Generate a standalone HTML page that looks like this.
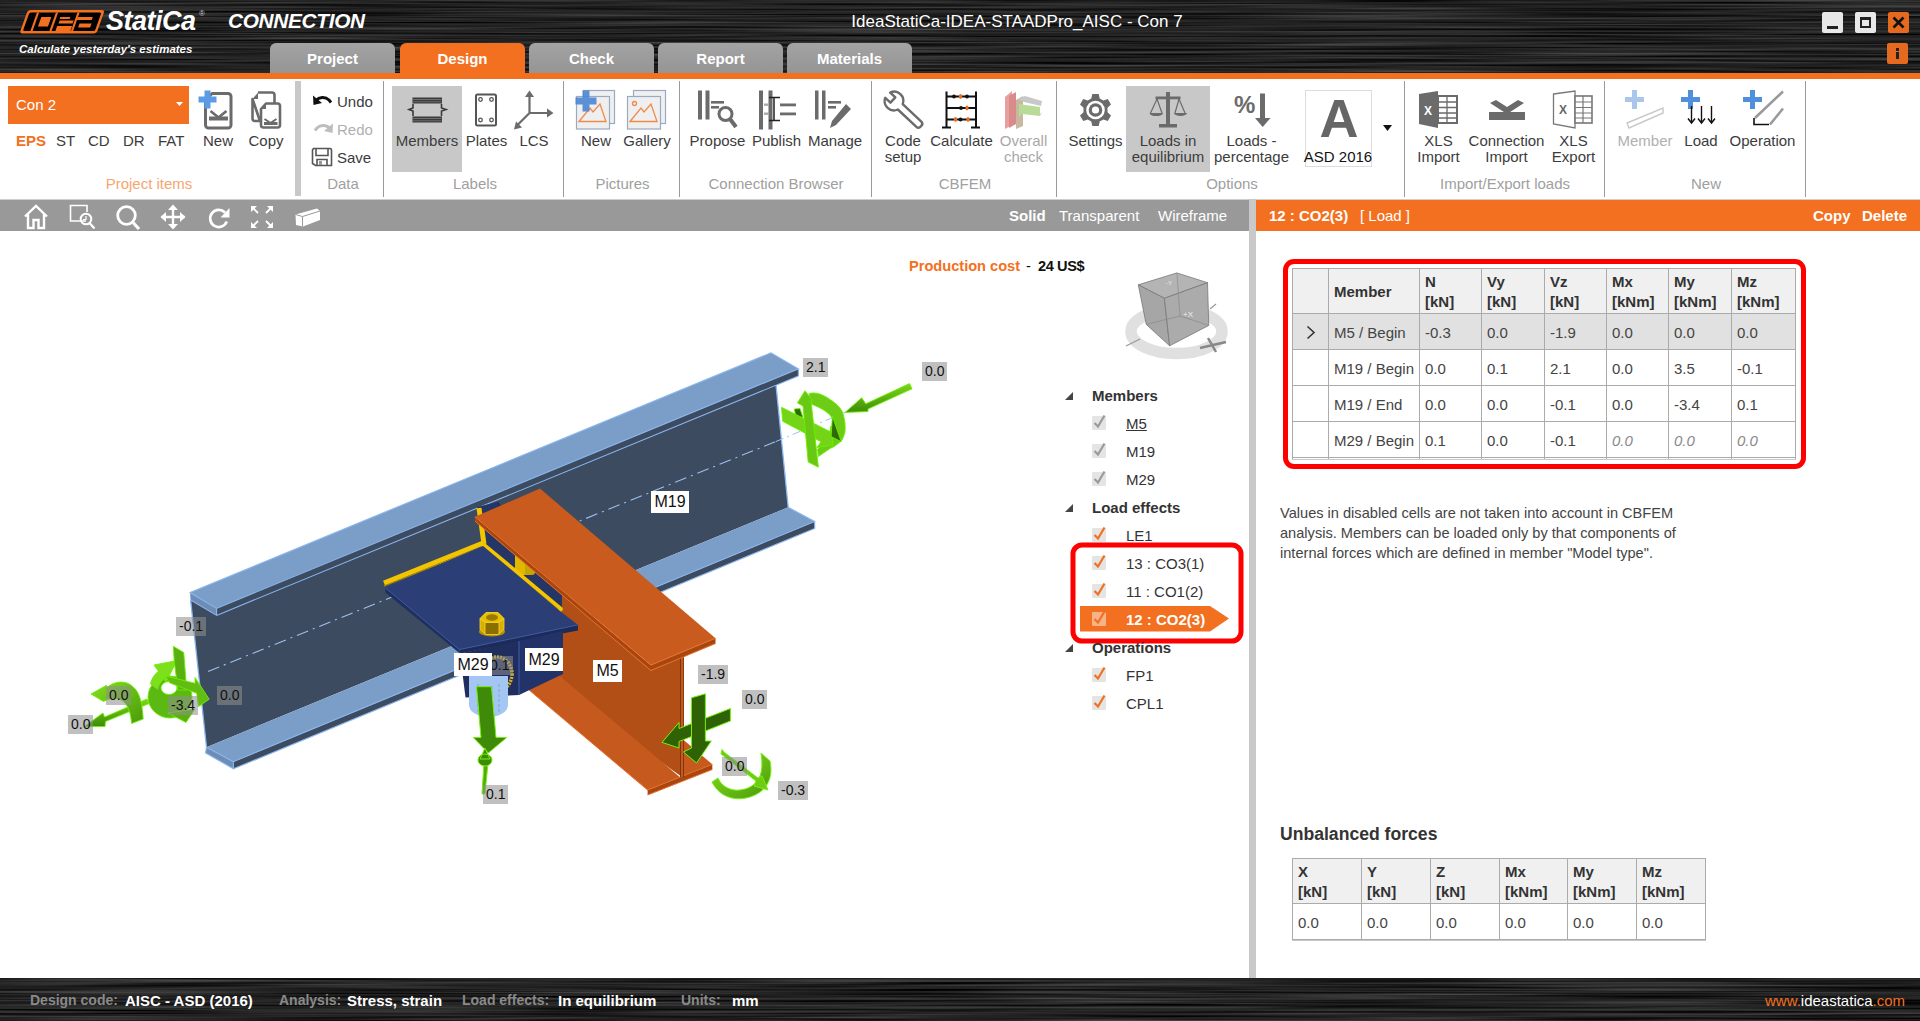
<!DOCTYPE html>
<html><head><meta charset="utf-8">
<style>
*{margin:0;padding:0;box-sizing:border-box}
html,body{width:1920px;height:1021px;overflow:hidden;background:#fff;font-family:"Liberation Sans",sans-serif;color:#333}
.a{position:absolute}
.brushed{background:
 repeating-linear-gradient(180deg,rgba(0,0,0,0) 0px,rgba(255,255,255,.07) 1.5px,rgba(0,0,0,0) 3px,rgba(0,0,0,0) 4.7px),
 repeating-linear-gradient(180deg,rgba(0,0,0,0) 0px,rgba(0,0,0,.4) 2px,rgba(0,0,0,0) 4px,rgba(0,0,0,0) 7.3px),
 repeating-linear-gradient(180deg,rgba(0,0,0,0) 0px,rgba(255,255,255,.05) 2px,rgba(0,0,0,0) 4px,rgba(0,0,0,0) 11.1px),
 linear-gradient(90deg,rgba(255,255,255,.02),rgba(0,0,0,.1) 30%,rgba(255,255,255,.03) 60%,rgba(0,0,0,.08)),
 #262626;}
#title{left:0;top:0;width:1920px;height:73px}
#ostrip{left:0;top:73px;width:1920px;height:6px;background:#f37021}
.tab{top:43px;height:30px;width:125px;border-radius:6px 6px 0 0;background:linear-gradient(#a3a3a3,#959595);color:#fff;font-weight:bold;font-size:15px;text-align:center;line-height:31px}
.tab.on{background:#f37021}
.wbtn{width:21px;height:21px;border-radius:2px;background:#e8e8e8}
#ribbon{left:0;top:79px;width:1920px;height:120px;background:#fff}
.rl{font-size:15px;color:#3c3c3c;white-space:nowrap;line-height:16px;text-align:center}
.gl{font-size:15px;color:#a0a0a0;white-space:nowrap;line-height:16px}
.sep{width:1px;background:#9a9a9a;top:81px;height:116px}
#vtool{left:0;top:199px;width:1249px;height:32px;background:#999;border-top:1px solid #c9d0d6}
#splitter{left:1249px;top:199px;width:7px;height:780px;background:#c9c9c9}
#rhead{left:1256px;top:199px;width:664px;height:32px;background:#f37021;border-top:1px solid #c9d0d6}
#status{left:0;top:978px;width:1920px;height:43px}
.st{font-size:15px;top:992px;white-space:nowrap;line-height:17px}
.stl{color:#8a8a8a;font-weight:bold;font-size:14px}
.stv{color:#fff;font-weight:bold}
table.g{border-collapse:collapse;font-size:15px;color:#333}
table.g td,table.g th{border:1px solid #c9c9c9;text-align:left;font-weight:normal;vertical-align:middle;padding:0 0 0 5px;white-space:nowrap}
table.g th{background:#f0f0f0;font-weight:bold;line-height:20px}
.tree{font-size:15px;color:#333;white-space:nowrap;line-height:17px}
.lbl{position:absolute;font-size:14px;line-height:16px;padding:1px 3px;white-space:nowrap;font-family:"Liberation Sans",sans-serif}
.lg{background:#bdbdbd;color:#333}
.lw{background:#fff;color:#111;font-size:17px;line-height:19px;padding:1px 4px}
</style></head>
<body>
<!-- TITLE BAR -->
<div id="title" class="a" style="background:#222"><svg class="a" style="left:0;top:0" width="1920" height="73"><defs><filter id="brush" color-interpolation-filters="sRGB" x="0" y="0" width="100%" height="100%"><feTurbulence type="fractalNoise" baseFrequency="0.004 0.45" numOctaves="2" seed="7"/><feColorMatrix type="matrix" values="0.42 0 0 0 -0.075  0.42 0 0 0 -0.075  0.42 0 0 0 -0.075  0 0 0 0 1"/></filter></defs><rect width="1920" height="73" fill="#222"/><rect width="1920" height="73" filter="url(#brush)"/></svg></div>
<div id="ostrip" class="a"></div>

<!-- tabs -->
<div class="a tab" style="left:270px">Project</div>
<div class="a tab on" style="left:400px">Design</div>
<div class="a tab" style="left:529px">Check</div>
<div class="a tab" style="left:658px">Report</div>
<div class="a tab" style="left:787px">Materials</div>

<div class="a" style="left:0;top:11px;width:2034px;text-align:center;color:#fff;font-size:17px;line-height:22px">IdeaStatiCa-IDEA-STAADPro_AISC - Con 7</div>

<!-- window buttons -->
<div class="a wbtn" style="left:1822px;top:12px"><div class="a" style="left:5px;top:14px;width:11px;height:3px;background:#222"></div></div>
<div class="a wbtn" style="left:1855px;top:12px"><div class="a" style="left:5px;top:5px;width:11px;height:11px;border:2px solid #222;border-top-width:3px"></div></div>
<div class="a wbtn" style="left:1888px;top:12px;background:#e56a1f"><svg class="a" style="left:0;top:0" width="21" height="21"><path d="M5.5 5.5L15.5 15.5M15.5 5.5L5.5 15.5" stroke="#111" stroke-width="2.6"/></svg></div>
<div class="a wbtn" style="left:1887px;top:43px;background:#e56a1f"><div class="a" style="left:9px;top:5px;width:3px;height:3px;background:#222"></div><div class="a" style="left:9px;top:9px;width:3px;height:7px;background:#222"></div></div>

<!-- RIBBON -->
<div id="ribbon" class="a"></div>
<!-- ribbon content -->
<div class="a" style="left:8px;top:86px;width:181px;height:38px;background:#f37021"></div>
<div class="a" style="left:16px;top:96px;color:#fff;font-size:15px;line-height:18px">Con 2</div>
<svg class="a" style="left:176px;top:102px" width="8" height="5"><path d="M0 0H7L3.5 4Z" fill="#fff"/></svg>
<div class="a rl" style="left:16px;top:133px;color:#f37021;font-weight:bold;text-align:left">EPS</div>
<div class="a rl" style="left:56px;top:133px;text-align:left">ST</div>
<div class="a rl" style="left:88px;top:133px;text-align:left">CD</div>
<div class="a rl" style="left:123px;top:133px;text-align:left">DR</div>
<div class="a rl" style="left:158px;top:133px;text-align:left">FAT</div>
<div class="a sep" style="left:295px;width:6px;background:#c8c8c8;top:81px;height:115px"></div>
<div class="a" style="left:392px;top:86px;width:70px;height:86px;background:#c8c8c8"></div>
<div class="a" style="left:1126px;top:86px;width:84px;height:86px;background:#c8c8c8"></div>
<div class="a" style="left:1305px;top:90px;width:67px;height:77px;border:1px solid #dcdcdc"></div>
<div class="a" style="left:1318px;top:88px;width:42px;text-align:center;font-weight:bold;font-size:54px;line-height:60px;color:#666">A</div>
<svg class="a" style="left:1383px;top:125px" width="10" height="7"><path d="M0 0H9L4.5 6Z" fill="#111"/></svg>
<div class="a sep" style="left:383px"></div>
<div class="a sep" style="left:563px"></div>
<div class="a sep" style="left:679px"></div>
<div class="a sep" style="left:871px"></div>
<div class="a sep" style="left:1056px"></div>
<div class="a sep" style="left:1404px"></div>
<div class="a sep" style="left:1604px"></div>
<div class="a sep" style="left:1805px"></div>
<div class="a rl" style="left:158px;width:120px;top:133px">New</div>
<div class="a rl" style="left:206px;width:120px;top:133px">Copy</div>
<div class="a rl" style="left:367px;width:120px;top:133px">Members</div>
<div class="a rl" style="left:426.5px;width:120px;top:133px">Plates</div>
<div class="a rl" style="left:474px;width:120px;top:133px">LCS</div>
<div class="a rl" style="left:536px;width:120px;top:133px">New</div>
<div class="a rl" style="left:587px;width:120px;top:133px">Gallery</div>
<div class="a rl" style="left:657.5px;width:120px;top:133px">Propose</div>
<div class="a rl" style="left:716.5px;width:120px;top:133px">Publish</div>
<div class="a rl" style="left:775px;width:120px;top:133px">Manage</div>
<div class="a rl" style="left:843px;width:120px;top:133px">Code<br>setup</div>
<div class="a rl" style="left:901.5px;width:120px;top:133px">Calculate</div>
<div class="a rl" style="left:963.5px;width:120px;top:133px"><span style="color:#a8a8a8">Overall<br>check</span></div>
<div class="a rl" style="left:1035.5px;width:120px;top:133px">Settings</div>
<div class="a rl" style="left:1108px;width:120px;top:133px">Loads in<br>equilibrium</div>
<div class="a rl" style="left:1191.5px;width:120px;top:133px">Loads -<br>percentage</div>
<div class="a rl" style="left:1278px;width:120px;top:149px"><span style="color:#111">ASD 2016</span></div>
<div class="a rl" style="left:1378.5px;width:120px;top:133px">XLS<br>Import</div>
<div class="a rl" style="left:1446.5px;width:120px;top:133px">Connection<br>Import</div>
<div class="a rl" style="left:1513.5px;width:120px;top:133px">XLS<br>Export</div>
<div class="a rl" style="left:1585px;width:120px;top:133px"><span style="color:#b0b0b0">Member</span></div>
<div class="a rl" style="left:1641px;width:120px;top:133px">Load</div>
<div class="a rl" style="left:1702.5px;width:120px;top:133px">Operation</div>
<div class="a rl" style="left:337px;top:94px;text-align:left">Undo</div>
<div class="a rl" style="left:337px;top:122px;text-align:left;color:#b0b0b0">Redo</div>
<div class="a rl" style="left:337px;top:150px;text-align:left">Save</div>
<div class="a gl" style="left:49px;width:200px;text-align:center;top:176px"><span style="color:#f6a66f">Project items</span></div>
<div class="a gl" style="left:243px;width:200px;text-align:center;top:176px">Data</div>
<div class="a gl" style="left:375px;width:200px;text-align:center;top:176px">Labels</div>
<div class="a gl" style="left:522.5px;width:200px;text-align:center;top:176px">Pictures</div>
<div class="a gl" style="left:676px;width:200px;text-align:center;top:176px">Connection Browser</div>
<div class="a gl" style="left:865px;width:200px;text-align:center;top:176px">CBFEM</div>
<div class="a gl" style="left:1132px;width:200px;text-align:center;top:176px">Options</div>
<div class="a gl" style="left:1405px;width:200px;text-align:center;top:176px">Import/Export loads</div>
<div class="a gl" style="left:1606px;width:200px;text-align:center;top:176px">New</div>
<!--ICONS-->
<svg class="a" style="left:0;top:0" width="1920" height="200">
<g fill="none" stroke="#6b6b6b" stroke-width="3" stroke-linejoin="round">
 <!-- New doc -->
 <path d="M212 93.5H228a3 3 0 0 1 3 3V125a3 3 0 0 1-3 3H208.5a3 3 0 0 1-3-3V100Z"/>
 <path d="M210.5 111L218.5 117.5L226.5 111" stroke-width="2.6"/>
 <!-- copy docs -->
 <path d="M258 92.5H272a2.5 2.5 0 0 1 2.5 2.5V103M260 121H255a2.5 2.5 0 0 1-2.5-2.5V99Z" stroke-width="2.6"/>
 <path d="M266 103.5H277.5a2.5 2.5 0 0 1 2.5 2.5V125a2.5 2.5 0 0 1-2.5 2.5H263.5a2.5 2.5 0 0 1-2.5-2.5V109Z" stroke-width="2.6"/>
 <path d="M264.5 119L270.5 123L276.5 119" stroke-width="2"/>
</g>
<rect x="209" y="116.5" width="19" height="4" fill="#6b6b6b"/>
<path d="M252.5 99L258 92.5V99Z" fill="#6b6b6b"/>
<path d="M261 109L266 103.5V109Z" fill="#6b6b6b"/>
<rect x="264" y="122" width="13.5" height="3" fill="#6b6b6b"/>
<path d="M204.5 90.5h6v6h6v6h-6v6h-6v-6h-6v-6h6z" fill="#5c9ce6"/>
<!-- Undo / Redo -->
<path d="M316 100.5 C319 97 325 96 329 100 L331 102.5" fill="none" stroke="#111" stroke-width="3"/>
<path d="M313 95.5L313.5 105L322 103Z" fill="#111"/>
<path d="M330 128.5 C327 125 321 124 317 128 L315 130.5" fill="none" stroke="#bdbdbd" stroke-width="3"/>
<path d="M333 123.5L332.5 133L324 131Z" fill="#bdbdbd"/>
<!-- Save floppy -->
<g fill="none" stroke="#555" stroke-width="1.6">
<path d="M313.5 148.5H330a1.5 1.5 0 0 1 1.5 1.5V165.5H315.5L312.5 163.5V150Z"/>
<path d="M316 148.5V155.5H328V148.5M317 165.5V159.5H327V165.5"/>
</g>
<rect x="319" y="161" width="3" height="4" fill="#999"/>
<!-- Members -->
<g fill="#3a3a3a">
<rect x="412.5" y="97.5" width="29.5" height="6"/><rect x="412.5" y="116.5" width="29.5" height="6"/>
</g><path d="M413,99.5H441.5M413,101.8H441.5M413,118.5H441.5M413,120.8H441.5" stroke="#888" stroke-width="0.7"/>
<path d="M413 104V108L409 109.5L413 111V116M441.5 104V108L446 109.5L441.5 111V116" fill="none" stroke="#3a3a3a" stroke-width="1.6"/>
<!-- Plates -->
<rect x="476" y="94.5" width="20" height="31" rx="1.5" fill="none" stroke="#555" stroke-width="2"/>
<g fill="none" stroke="#555" stroke-width="1.3"><circle cx="480.5" cy="99.5" r="1.8"/><circle cx="491.5" cy="99.5" r="1.8"/><circle cx="480.5" cy="120" r="1.8"/><circle cx="491.5" cy="120" r="1.8"/></g>
<!-- LCS -->
<g stroke="#6b6b6b" stroke-width="2.2" fill="none"><path d="M529.5 113V95M529.5 113H549M529.5 113L517 125.5"/></g>
<g fill="#6b6b6b"><path d="M525 97L529.5 90.5L534 97Z"/><path d="M547 108.5L553.5 113L547 117.5Z"/><path d="M514 129.5L516 121.5L522 127.5Z"/></g>
<!-- pictures New -->
<g stroke="#9aa9c4" stroke-width="1.2">
<rect x="583.5" y="90.5" width="31" height="33" fill="#f0f0f0"/>
<rect x="576.5" y="96.5" width="33" height="32.5" fill="#efefef"/>
<rect x="633.5" y="90.5" width="32" height="33" fill="#f0f0f0"/>
<rect x="627.5" y="96.5" width="33" height="32.5" fill="#efefef"/>
</g>
<g fill="none" stroke="#f08a4b" stroke-width="1.3">
<path d="M579 121.5L590 108L593 112L600 104L606 121.5Z"/>
<path d="M630 121.5L641 108L644 112L651 104L657 121.5Z"/>
<circle cx="634.5" cy="103.5" r="2"/>
</g>
<path d="M582.5 90.5h7v7h7v7h-7v7h-7v-7h-7v-7h7z" fill="#4d86d4" opacity=".9"/>
<!-- Propose -->
<g fill="#6b6b6b">
<rect x="698" y="90.5" width="4" height="29"/><rect x="705.5" y="90.5" width="4" height="29"/>
<rect x="711" y="101" width="13" height="2.6"/><rect x="711" y="106" width="8" height="2.6"/>
<rect x="759" y="90.5" width="4" height="39"/><rect x="768.5" y="90.5" width="4" height="39"/>
<rect x="780" y="103.5" width="16" height="2.8"/><rect x="780" y="112.5" width="16" height="2.8"/><rect x="764" y="103.5" width="5" height="2.4" fill="#aaa"/><rect x="764" y="112.5" width="5" height="2.4" fill="#aaa"/>
<rect x="815" y="90.5" width="3.5" height="29"/><rect x="822" y="90.5" width="3.5" height="29"/>
<rect x="828" y="101" width="13" height="2.6"/><rect x="828" y="106" width="8" height="2.6"/>
</g>
<circle cx="725.5" cy="114" r="6.5" fill="none" stroke="#6b6b6b" stroke-width="3"/>
<path d="M730 119L736 127" stroke="#6b6b6b" stroke-width="4"/>
<path d="M774 97.5V121M769 97.5H780M769 120.5H780" stroke="#222" stroke-width="1.5"/>
<path d="M846 104L851 109L836 125L830 128L832 121Z" fill="#6b6b6b"/>
<!-- Code setup wrench -->
<g transform="translate(894,101) rotate(43)"><path d="M8.6,3.6 L34,3.6 Q37,3.6 37,0 Q37,-3.6 34,-3.6 L8.6,-3.6 A9.3 9.3 0 0 0 -8.6,-3.6 L-1.5,-3.6 L-1.5,3.6 L-8.6,3.6 A9.3 9.3 0 0 0 8.6,3.6 Z" fill="none" stroke="#6b6b6b" stroke-width="2.4" stroke-linejoin="round"/></g>
<!-- Calculate abacus -->
<g stroke="#111" stroke-width="2" fill="none">
<path d="M946.5 91.5V127M976 91.5V127M942 127.5H951M971 127.5H980M946.5 96.5H976M946.5 108H976M946.5 119.5H976"/>
</g>
<g fill="#111"><circle cx="954" cy="96.5" r="1.9"/><circle cx="967" cy="96.5" r="1.9"/><circle cx="961" cy="108" r="1.9"/><circle cx="960.5" cy="119.5" r="1.9"/></g>
<g fill="#f07020"><ellipse cx="960.5" cy="96.5" rx="1.6" ry="2.4"/><ellipse cx="967" cy="108" rx="1.6" ry="2.4"/><ellipse cx="955.5" cy="119.5" rx="1.6" ry="2.4"/><ellipse cx="968" cy="119.5" rx="1.6" ry="2.4"/></g>
<!-- Overall check -->
<path d="M1005 97L1012 91V125L1005 129Z" fill="#e6a0a0"/>
<path d="M1009 96L1016 92V124L1009 128Z" fill="#d98a8a"/>
<path d="M1016 100L1023 96V126L1016 129Z" fill="#c8b8a0"/>
<path d="M1018 99L1025 96L1042 101L1041 106L1024 102Z" fill="#c8c8c8"/>
<path d="M1019 104L1040 107V114L1042 112L1040 116L1022 114L1019 117Z" fill="#b8dc98"/>
<!-- Settings gear -->
<g transform="translate(1095.5,110)">
<path d="M-3.2-16H3.2L4.2-11.4L7.8-9.4L12.3-10.9L15.5-5.4L12-2.2V2.2L15.5 5.4L12.3 10.9L7.8 9.4L4.2 11.4L3.2 16H-3.2L-4.2 11.4L-7.8 9.4L-12.3 10.9L-15.5 5.4L-12 2.2V-2.2L-15.5-5.4L-12.3-10.9L-7.8-9.4L-4.2-11.4Z" fill="#6b6b6b"/>
<circle r="9.3" fill="#fff"/><circle r="6.8" fill="#6b6b6b"/><circle r="3.6" fill="#fff"/>
</g>
<!-- Scales -->
<g fill="#6b6b6b">
<rect x="1166" y="92" width="4" height="33"/><rect x="1155.5" y="96.5" width="25" height="2.8"/><rect x="1159" y="124" width="18" height="3.5"/>
</g>
<g fill="none" stroke="#6b6b6b" stroke-width="1.2"><path d="M1157 99L1150.5 113M1157 99L1162 113M1179 99L1175 113M1179 99L1185 113"/></g>
<path d="M1149.5 113H1163a6.7 3 0 0 1-13.5 0Z M1174 113H1187a6.5 3 0 0 1-13 0Z" fill="#6b6b6b"/>
<!-- % arrow -->
<text x="1234" y="112.5" font-family="Liberation Sans" font-weight="bold" font-size="24" fill="#6b6b6b" textLength="21">%</text>
<rect x="1260" y="93.5" width="5" height="27" fill="#6b6b6b"/>
<path d="M1255 118H1270.5L1262.7 127Z" fill="#6b6b6b"/>
<!-- XLS import -->
<path d="M1419 94L1438 91V128L1419 124Z" fill="#6b6b6b"/>
<rect x="1438" y="96" width="19" height="27" fill="#fff" stroke="#6b6b6b" stroke-width="2"/>
<g stroke="#6b6b6b" stroke-width="1.3"><path d="M1447 96V123M1438 102H1457M1438 107.5H1457M1438 113H1457M1438 118H1457"/></g>
<text x="1424" y="115" font-family="Liberation Sans" font-weight="bold" font-size="12" fill="#fff">X</text>
<!-- Connection import -->
<path d="M1489 112H1525V120H1489Z" fill="#6b6b6b"/>
<path d="M1490 103L1496 100L1507 107L1518 100L1524 103L1507 114Z" fill="#6b6b6b"/>
<!-- XLS export -->
<path d="M1553.5 94L1575 91V128L1553.5 124Z" fill="#fff" stroke="#777" stroke-width="1.3"/>
<rect x="1575" y="96" width="17" height="27" fill="#fff" stroke="#777" stroke-width="1.6"/>
<g stroke="#777" stroke-width="1.2"><path d="M1583 96V123M1575 102H1592M1575 107.5H1592M1575 113H1592M1575 118H1592"/></g>
<text x="1559" y="114" font-family="Liberation Sans" font-weight="bold" font-size="12" fill="#666">X</text>
<!-- Member disabled -->
<path d="M1632 90h5v7h7v5h-7v7h-5v-7h-7v-5h7z" fill="#aac6ea"/>
<path d="M1627 123L1663 108V113L1629 128Z" fill="#fff" stroke="#c8c8c8" stroke-width="1.4"/>
<!-- Load -->
<path d="M1688 90h5v7h7v5h-7v7h-5v-7h-7v-5h7z" fill="#4f8fdc"/>
<g stroke="#111" stroke-width="1.4" fill="none"><path d="M1691.5 106V122M1701.5 106V122M1711.5 106V122M1688 118.5L1691.5 123L1695 118.5M1698 118.5L1701.5 123L1705 118.5M1708 118.5L1711.5 123L1715 118.5"/></g>
<!-- Operation -->
<path d="M1750 90h5v7h7v5h-7v7h-5v-7h-7v-5h7z" fill="#4f8fdc"/>
<path d="M1783 91.5L1755 118M1783 108.5L1770 124.5" stroke="#999" stroke-width="2.5"/>
<path d="M1754 118V124.5H1769" stroke="#111" stroke-width="1.6" fill="none"/>
</svg>
<!--/ICONS-->
<!--MAIN-->
<div id="vtool" class="a"></div>
<div id="splitter" class="a"></div>
<div id="rhead" class="a"></div>
<svg class="a" style="left:0;top:199px" width="340" height="32">
<g transform="translate(0,-199)" fill="none" stroke="#fff" stroke-width="2.4">
<path d="M25 216.5L36 206L47 216.5M28 214V228H33.5V220H38.5V228H44V214" stroke-linejoin="miter"/>
<path d="M86 221H70.5V205.5H87V212" stroke-width="1.6"/>
<circle cx="86" cy="219" r="5.3" stroke-width="2"/><path d="M89.5 223L94.5 228.5" stroke-width="2.2"/><path d="M86 216V219.5H83" stroke-width="1.2"/>
<circle cx="126.5" cy="215.5" r="8.8" stroke-width="2.8"/><path d="M133 222.5L139 229" stroke-width="3.2"/>
<path d="M173 206V228M161.5 217H184.5" stroke-width="2.4"/>
<path d="M226.8,221.6 A8.6 8.6 0 1 1 225,212.5" stroke-width="2.6"/>
<path d="M252 207L258 213M272 207L266 213M252 227L258 221M272 227L266 221" stroke-width="1.8"/>
</g>
<g transform="translate(0,-199)" fill="#fff">
<path d="M168 210L173 204.5L178 210Z M168 224L173 229.5L178 224Z M166 212L160.5 217L166 222Z M180 212L185.5 217L180 222Z"/>
<path d="M220.5 217.5H229.5V208Z"/>
<path d="M251 206H257L251 212Z M273 206H267L273 212Z M251 228H257L251 222Z M273 228H267L273 222Z"/>
<path d="M295.5 214.5L317 208.5L320 211V220L303 226.5L296 225Z"/>
</g>
<path d="M295.5 214.5L302.5 216.5L320 211M302.5 216.5V226.5" transform="translate(0,-199)" stroke="#999" stroke-width="1" fill="none"/>
</svg>
<div class="a" style="left:1009px;top:208px;color:#fff;font-weight:bold;font-size:15px;line-height:16px">Solid</div>
<div class="a" style="left:1059px;top:208px;color:#fff;font-size:15px;line-height:16px">Transparent</div>
<div class="a" style="left:1158px;top:208px;color:#fff;font-size:15px;line-height:16px">Wireframe</div>
<div class="a" style="left:1269px;top:208px;color:#fff;font-weight:bold;font-size:15px;line-height:16px">12 : CO2(3)</div>
<div class="a" style="left:1360px;top:208px;color:#fff;font-size:15px;line-height:16px">[ Load ]</div>
<div class="a" style="left:1813px;top:208px;color:#fff;font-weight:bold;font-size:15px;line-height:16px">Copy</div>
<div class="a" style="left:1862px;top:208px;color:#fff;font-weight:bold;font-size:15px;line-height:16px">Delete</div>

<div class="a" style="left:909px;top:258px;font-weight:bold;font-size:14.6px;line-height:16px;white-space:nowrap;color:#f37021">Production cost</div>
<div class="a" style="left:1026px;top:258px;font-size:14.6px;line-height:16px;color:#111">-</div>
<div class="a" style="left:1038px;top:258px;font-weight:bold;font-size:14.6px;line-height:16px;white-space:nowrap;color:#111;letter-spacing:-0.4px">24 US$</div>

<!-- STATUS -->
<div id="status" class="a" style="background:#222"><svg class="a" style="left:0;top:0" width="1920" height="43"><defs><filter id="brush2" color-interpolation-filters="sRGB" x="0" y="0" width="100%" height="100%"><feTurbulence type="fractalNoise" baseFrequency="0.004 0.45" numOctaves="2" seed="3"/><feColorMatrix type="matrix" values="0.42 0 0 0 -0.075  0.42 0 0 0 -0.075  0.42 0 0 0 -0.075  0 0 0 0 1"/></filter></defs><rect width="1920" height="43" fill="#222"/><rect width="1920" height="43" filter="url(#brush2)"/></svg></div>
<div class="a st stl" style="left:30px">Design code:</div><div class="a st stv" style="left:125px">AISC - ASD (2016)</div>
<div class="a st stl" style="left:279px">Analysis:</div><div class="a st stv" style="left:347px">Stress, strain</div>
<div class="a st stl" style="left:462px">Load effects:</div><div class="a st stv" style="left:558px">In equilibrium</div>
<div class="a st stl" style="left:681px">Units:</div><div class="a st stv" style="left:732px">mm</div>
<div class="a st" style="left:1765px;color:#fff"><span style="color:#f37021">www.</span>ideastatica<span style="color:#f37021">.com</span></div>
<div class="a" style="left:1283px;top:259px;width:523px;height:210px;border:5px solid #fe0000;border-radius:11px"></div>
<div class="a" style="left:1292px;top:268px;width:503px;height:45px;background:#f0f0f0"></div>
<div class="a" style="left:1292px;top:313px;width:503px;height:36px;background:#e1e1e1"></div>
<div class="a" style="left:1292px;top:268px;width:1px;height:191px;background:#ababab"></div>
<div class="a" style="left:1328px;top:268px;width:1px;height:191px;background:#ababab"></div>
<div class="a" style="left:1419px;top:268px;width:1px;height:191px;background:#ababab"></div>
<div class="a" style="left:1481px;top:268px;width:1px;height:191px;background:#ababab"></div>
<div class="a" style="left:1544px;top:268px;width:1px;height:191px;background:#ababab"></div>
<div class="a" style="left:1606px;top:268px;width:1px;height:191px;background:#ababab"></div>
<div class="a" style="left:1668px;top:268px;width:1px;height:191px;background:#ababab"></div>
<div class="a" style="left:1731px;top:268px;width:1px;height:191px;background:#ababab"></div>
<div class="a" style="left:1795px;top:268px;width:1px;height:191px;background:#ababab"></div>
<div class="a" style="left:1292px;top:268px;width:504px;height:1px;background:#ababab"></div>
<div class="a" style="left:1292px;top:313px;width:504px;height:1px;background:#ababab"></div>
<div class="a" style="left:1292px;top:349px;width:504px;height:1px;background:#ababab"></div>
<div class="a" style="left:1292px;top:385px;width:504px;height:1px;background:#ababab"></div>
<div class="a" style="left:1292px;top:421px;width:504px;height:1px;background:#ababab"></div>
<div class="a" style="left:1292px;top:457px;width:504px;height:1px;background:#ababab"></div>
<div class="a" style="left:1292px;top:459px;width:504px;height:1px;background:#c8c8c8"></div>
<div class="a" style="left:1334px;top:283.8px;font-size:15px;line-height:16px;white-space:nowrap;color:#333;font-weight:bold">Member</div>
<div class="a" style="left:1425px;top:273.8px;font-size:15px;line-height:16px;white-space:nowrap;color:#333;font-weight:bold">N</div>
<div class="a" style="left:1425px;top:293.8px;font-size:15px;line-height:16px;white-space:nowrap;color:#333;font-weight:bold">[kN]</div>
<div class="a" style="left:1487px;top:273.8px;font-size:15px;line-height:16px;white-space:nowrap;color:#333;font-weight:bold">Vy</div>
<div class="a" style="left:1487px;top:293.8px;font-size:15px;line-height:16px;white-space:nowrap;color:#333;font-weight:bold">[kN]</div>
<div class="a" style="left:1550px;top:273.8px;font-size:15px;line-height:16px;white-space:nowrap;color:#333;font-weight:bold">Vz</div>
<div class="a" style="left:1550px;top:293.8px;font-size:15px;line-height:16px;white-space:nowrap;color:#333;font-weight:bold">[kN]</div>
<div class="a" style="left:1612px;top:273.8px;font-size:15px;line-height:16px;white-space:nowrap;color:#333;font-weight:bold">Mx</div>
<div class="a" style="left:1612px;top:293.8px;font-size:15px;line-height:16px;white-space:nowrap;color:#333;font-weight:bold">[kNm]</div>
<div class="a" style="left:1674px;top:273.8px;font-size:15px;line-height:16px;white-space:nowrap;color:#333;font-weight:bold">My</div>
<div class="a" style="left:1674px;top:293.8px;font-size:15px;line-height:16px;white-space:nowrap;color:#333;font-weight:bold">[kNm]</div>
<div class="a" style="left:1737px;top:273.8px;font-size:15px;line-height:16px;white-space:nowrap;color:#333;font-weight:bold">Mz</div>
<div class="a" style="left:1737px;top:293.8px;font-size:15px;line-height:16px;white-space:nowrap;color:#333;font-weight:bold">[kNm]</div>
<div class="a" style="left:1334px;top:324.8px;font-size:15px;line-height:16px;white-space:nowrap;color:#333;color:#444">M5 / Begin</div>
<div class="a" style="left:1425px;top:324.8px;font-size:15px;line-height:16px;white-space:nowrap;color:#333;color:#444">-0.3</div>
<div class="a" style="left:1487px;top:324.8px;font-size:15px;line-height:16px;white-space:nowrap;color:#333;color:#444">0.0</div>
<div class="a" style="left:1550px;top:324.8px;font-size:15px;line-height:16px;white-space:nowrap;color:#333;color:#444">-1.9</div>
<div class="a" style="left:1612px;top:324.8px;font-size:15px;line-height:16px;white-space:nowrap;color:#333;color:#444">0.0</div>
<div class="a" style="left:1674px;top:324.8px;font-size:15px;line-height:16px;white-space:nowrap;color:#333;color:#444">0.0</div>
<div class="a" style="left:1737px;top:324.8px;font-size:15px;line-height:16px;white-space:nowrap;color:#333;color:#444">0.0</div>
<div class="a" style="left:1334px;top:360.8px;font-size:15px;line-height:16px;white-space:nowrap;color:#333;color:#444">M19 / Begin</div>
<div class="a" style="left:1425px;top:360.8px;font-size:15px;line-height:16px;white-space:nowrap;color:#333;color:#444">0.0</div>
<div class="a" style="left:1487px;top:360.8px;font-size:15px;line-height:16px;white-space:nowrap;color:#333;color:#444">0.1</div>
<div class="a" style="left:1550px;top:360.8px;font-size:15px;line-height:16px;white-space:nowrap;color:#333;color:#444">2.1</div>
<div class="a" style="left:1612px;top:360.8px;font-size:15px;line-height:16px;white-space:nowrap;color:#333;color:#444">0.0</div>
<div class="a" style="left:1674px;top:360.8px;font-size:15px;line-height:16px;white-space:nowrap;color:#333;color:#444">3.5</div>
<div class="a" style="left:1737px;top:360.8px;font-size:15px;line-height:16px;white-space:nowrap;color:#333;color:#444">-0.1</div>
<div class="a" style="left:1334px;top:396.8px;font-size:15px;line-height:16px;white-space:nowrap;color:#333;color:#444">M19 / End</div>
<div class="a" style="left:1425px;top:396.8px;font-size:15px;line-height:16px;white-space:nowrap;color:#333;color:#444">0.0</div>
<div class="a" style="left:1487px;top:396.8px;font-size:15px;line-height:16px;white-space:nowrap;color:#333;color:#444">0.0</div>
<div class="a" style="left:1550px;top:396.8px;font-size:15px;line-height:16px;white-space:nowrap;color:#333;color:#444">-0.1</div>
<div class="a" style="left:1612px;top:396.8px;font-size:15px;line-height:16px;white-space:nowrap;color:#333;color:#444">0.0</div>
<div class="a" style="left:1674px;top:396.8px;font-size:15px;line-height:16px;white-space:nowrap;color:#333;color:#444">-3.4</div>
<div class="a" style="left:1737px;top:396.8px;font-size:15px;line-height:16px;white-space:nowrap;color:#333;color:#444">0.1</div>
<div class="a" style="left:1334px;top:432.8px;font-size:15px;line-height:16px;white-space:nowrap;color:#333;color:#444">M29 / Begin</div>
<div class="a" style="left:1425px;top:432.8px;font-size:15px;line-height:16px;white-space:nowrap;color:#333;color:#444">0.1</div>
<div class="a" style="left:1487px;top:432.8px;font-size:15px;line-height:16px;white-space:nowrap;color:#333;color:#444">0.0</div>
<div class="a" style="left:1550px;top:432.8px;font-size:15px;line-height:16px;white-space:nowrap;color:#333;color:#444">-0.1</div>
<div class="a" style="left:1612px;top:432.8px;font-size:15px;line-height:16px;white-space:nowrap;color:#333;color:#8a8a8a;font-style:italic">0.0</div>
<div class="a" style="left:1674px;top:432.8px;font-size:15px;line-height:16px;white-space:nowrap;color:#333;color:#8a8a8a;font-style:italic">0.0</div>
<div class="a" style="left:1737px;top:432.8px;font-size:15px;line-height:16px;white-space:nowrap;color:#333;color:#8a8a8a;font-style:italic">0.0</div>
<svg class="a" style="left:1305px;top:325px" width="12" height="15"><path d="M2.5 1.5L9 7.5L2.5 13.5" fill="none" stroke="#333" stroke-width="1.6"/></svg>
<div class="a" style="left:1280px;top:504.8px;font-size:14.6px;line-height:16px;white-space:nowrap;color:#333;color:#444">Values in disabled cells are not taken into account in CBFEM</div>
<div class="a" style="left:1280px;top:524.8px;font-size:14.6px;line-height:16px;white-space:nowrap;color:#333;color:#444">analysis. Members can be loaded only by that components of</div>
<div class="a" style="left:1280px;top:544.8px;font-size:14.6px;line-height:16px;white-space:nowrap;color:#333;color:#444">internal forces which are defined in member "Model type".</div>
<div class="a" style="left:1280px;top:825.8px;font-size:17.6px;line-height:16px;white-space:nowrap;color:#333;font-weight:bold;color:#333;font-size:17.6px">Unbalanced forces</div>
<div class="a" style="left:1292px;top:858px;width:414px;height:45px;background:#f0f0f0"></div>
<div class="a" style="left:1292px;top:858px;width:1px;height:82px;background:#ababab"></div>
<div class="a" style="left:1361px;top:858px;width:1px;height:82px;background:#ababab"></div>
<div class="a" style="left:1430px;top:858px;width:1px;height:82px;background:#ababab"></div>
<div class="a" style="left:1499px;top:858px;width:1px;height:82px;background:#ababab"></div>
<div class="a" style="left:1567px;top:858px;width:1px;height:82px;background:#ababab"></div>
<div class="a" style="left:1636px;top:858px;width:1px;height:82px;background:#ababab"></div>
<div class="a" style="left:1705px;top:858px;width:1px;height:82px;background:#ababab"></div>
<div class="a" style="left:1292px;top:858px;width:414px;height:1px;background:#ababab"></div>
<div class="a" style="left:1292px;top:903px;width:414px;height:1px;background:#ababab"></div>
<div class="a" style="left:1292px;top:939px;width:414px;height:1px;background:#ababab"></div>
<div class="a" style="left:1292px;top:940px;width:414px;height:1px;background:#c8c8c8"></div>
<div class="a" style="left:1298px;top:863.8px;font-size:15px;line-height:16px;white-space:nowrap;color:#333;font-weight:bold">X</div>
<div class="a" style="left:1298px;top:883.8px;font-size:15px;line-height:16px;white-space:nowrap;color:#333;font-weight:bold">[kN]</div>
<div class="a" style="left:1298px;top:914.8px;font-size:15px;line-height:16px;white-space:nowrap;color:#333;color:#444">0.0</div>
<div class="a" style="left:1367px;top:863.8px;font-size:15px;line-height:16px;white-space:nowrap;color:#333;font-weight:bold">Y</div>
<div class="a" style="left:1367px;top:883.8px;font-size:15px;line-height:16px;white-space:nowrap;color:#333;font-weight:bold">[kN]</div>
<div class="a" style="left:1367px;top:914.8px;font-size:15px;line-height:16px;white-space:nowrap;color:#333;color:#444">0.0</div>
<div class="a" style="left:1436px;top:863.8px;font-size:15px;line-height:16px;white-space:nowrap;color:#333;font-weight:bold">Z</div>
<div class="a" style="left:1436px;top:883.8px;font-size:15px;line-height:16px;white-space:nowrap;color:#333;font-weight:bold">[kN]</div>
<div class="a" style="left:1436px;top:914.8px;font-size:15px;line-height:16px;white-space:nowrap;color:#333;color:#444">0.0</div>
<div class="a" style="left:1505px;top:863.8px;font-size:15px;line-height:16px;white-space:nowrap;color:#333;font-weight:bold">Mx</div>
<div class="a" style="left:1505px;top:883.8px;font-size:15px;line-height:16px;white-space:nowrap;color:#333;font-weight:bold">[kNm]</div>
<div class="a" style="left:1505px;top:914.8px;font-size:15px;line-height:16px;white-space:nowrap;color:#333;color:#444">0.0</div>
<div class="a" style="left:1573px;top:863.8px;font-size:15px;line-height:16px;white-space:nowrap;color:#333;font-weight:bold">My</div>
<div class="a" style="left:1573px;top:883.8px;font-size:15px;line-height:16px;white-space:nowrap;color:#333;font-weight:bold">[kNm]</div>
<div class="a" style="left:1573px;top:914.8px;font-size:15px;line-height:16px;white-space:nowrap;color:#333;color:#444">0.0</div>
<div class="a" style="left:1642px;top:863.8px;font-size:15px;line-height:16px;white-space:nowrap;color:#333;font-weight:bold">Mz</div>
<div class="a" style="left:1642px;top:883.8px;font-size:15px;line-height:16px;white-space:nowrap;color:#333;font-weight:bold">[kNm]</div>
<div class="a" style="left:1642px;top:914.8px;font-size:15px;line-height:16px;white-space:nowrap;color:#333;color:#444">0.0</div>
<!--MODEL-->
<svg class="a" style="left:0;top:231px" width="1249" height="747" viewBox="0 231 1249 747">
<!-- M19 web -->
<polygon points="190.6,600 776,385 788.2,507.3 206.5,747.2" fill="#3c4b5f"/>
<path d="M190.6,600 L206.5,747.2 M776,385 L788.2,507.3" stroke="#8ab6ee" stroke-width="1.3"/>
<!-- centre dash line -->
<path d="M208,671.5 L776,441.5" stroke="#9cc0ee" stroke-width="1.1" stroke-dasharray="12 5 2 5" />
<!-- M19 top flange -->
<polygon points="190.1,592.5 771,352.8 798.4,368.8 216.6,608.4" fill="#7b9ec9"/>
<polygon points="216.6,608.4 798.4,368.8 798.4,376 216.6,615.4" fill="#3c4b5f"/>
<polygon points="190.1,592.5 216.6,608.4 216.6,615.4 190.6,600" fill="#6d8cb6"/>
<path d="M190.1,592.5 L771,352.8 L798.4,368.8 L216.6,608.4 Z M216.6,615.4 L798.4,376 M798.4,368.8V376 M216.6,608.4V615.4 M190.6,600 L216.6,615.4" fill="none" stroke="#8ab6ee" stroke-width="1.1"/>
<!-- M19 bottom flange -->
<polygon points="206.5,747.2 788.2,507.3 814.7,521.5 233.4,761.7" fill="#7b9ec9"/>
<polygon points="233.4,761.7 814.7,521.5 814.7,528.4 233.4,768.8" fill="#3c4b5f"/>
<polygon points="206.5,747.2 233.4,761.7 233.4,768.8 205.6,752.9" fill="#6d8cb6"/>
<path d="M206.5,747.2 L233.4,761.7 L814.7,521.5 L788.2,507.3 M233.4,768.8 L814.7,528.4 V521.5 M233.4,761.7V768.8 L205.6,752.9 L206.5,747.2" fill="none" stroke="#8ab6ee" stroke-width="1.1"/>

<!-- M5 web face & bottom flange -->
<polygon points="562,594 650.9,670.5 682,657 682,777 540,675 540,640" fill="#b14f17"/>
<polygon points="647.6,790 680,777.2 520,642.4 470,620 519,681.5" fill="#c65a1e"/>
<polygon points="683,777 712.3,764.3 683,739.6" fill="#c65a1e"/>
<polygon points="647.6,790 712.3,764.3 712.3,769.5 647.6,795" fill="#a8460f"/>
<path d="M519,681.5 L647.6,790 L712.3,764.3 M647.6,795 L712.3,769.5" fill="none" stroke="#e8702c" stroke-width="1"/>
<rect x="680.5" y="655" width="3" height="122" fill="#c65a1e"/>
<path d="M680.5,655V777 M683.5,655V777" stroke="#7a3008" stroke-width="0.9"/>

<!-- vertical leg -->
<polygon points="477,507 497.6,502 562,592.8 562,608.5 483.5,542.7" fill="#243566"/>
<path d="M497.6,502 L562,592.8" stroke="#1b2850" stroke-width="1"/>
<!-- bolt shank behind -->
<rect x="515" y="554" width="20" height="21" rx="3" fill="#c9a400"/>
<rect x="515" y="554" width="10" height="21" fill="#e0b800"/>
<!-- welds -->
<path d="M479,508 L484,544" stroke="#f2c500" stroke-width="5"/>
<path d="M483,545 L560,609" stroke="#f2c500" stroke-width="5.5" stroke-linecap="round"/>
<path d="M384,583 L483,543" stroke="#f2c500" stroke-width="5"/>
<path d="M384,586 L483,546.5 L558,609" stroke="#b89200" stroke-width="1" fill="none"/>

<!-- plate -->
<polygon points="385.3,587.8 483,546 560,611 578,624.9 459.4,649.6" fill="#2b3e76"/>
<polygon points="385.3,587.8 459.4,649.6 460,653.5 385.3,592.5" fill="#1f2f60"/>
<polygon points="459.4,649.6 578,624.9 578,630.4 460,653.5" fill="#1c2b58"/>
<path d="M385.3,587.8 L459.4,649.6 L578,624.9" stroke="#3d58a4" stroke-width="1" fill="none"/>
<!-- M29 box below plate -->
<polygon points="460,653.5 519,641 519,695 465.5,697.6" fill="#1f2e5e"/>
<polygon points="519,641 563,631 563,674 519,695" fill="#22336a"/>
<path d="M519,641V695" stroke="#3d58a4" stroke-width="1.2"/>
<!-- yellow ring + cylinder -->
<ellipse cx="497" cy="674" rx="15" ry="17" fill="none" stroke="#d9b020" stroke-width="3.5" stroke-dasharray="2 1"/>
<path d="M469,676 L469,705 A19.5,12 0 0 0 508,705 L508,676 Z" fill="#a3c6f2"/>

<path d="M478,684V712 M484,686V714 M492,686V714 M499,684V712" stroke="#6d8cb6" stroke-width="0.6" stroke-dasharray="3 2"/>

<!-- M5 top flange (on top) -->
<polygon points="474.9,521 650.9,670.5 715.5,643.5 715.5,638.2 650.9,665.1 474.9,516.8" fill="#a8460f"/>
<polygon points="474.9,516.8 540,488.6 715.5,638.2 650.9,665.1" fill="#c95b1e"/>
<path d="M474.9,516.8 L650.9,665.1 L715.5,638.2 M474.9,521 L650.9,670.5 L715.5,643.5" fill="none" stroke="#e8702c" stroke-width="1"/>

<!-- nut -->
<g transform="translate(492,622.5)">
<ellipse cx="0" cy="9" rx="13" ry="5" fill="#b89200"/>
<polygon points="-12,-4 -6,-10 6,-10 12,-4 12,7 6,12 -6,12 -12,7" fill="#d8ae00"/>
<polygon points="-7,0 7,0 7,12 -7,12" fill="#8a6e00"/>
<polygon points="-12,-4 -6,-10 6,-10 12,-4 7,0 -7,0" fill="#e8c000"/>
<ellipse cx="0" cy="-5" rx="6" ry="3.2" fill="#9a7a00"/>
<path d="M-12,-4 L-6,-10 L6,-10 L12,-4 L12,7 L6,12 L-6,12 L-12,7 Z M-7,0V12 M7,0V12 M-12,-4L-7,0H7L12,-4" stroke="#f6d830" stroke-width="0.8" fill="none"/>
</g>
</svg>
<!--/MODEL-->
<!--ARROWS-->
<svg class="a" style="left:0;top:231px" width="1249" height="747" viewBox="0 231 1249 747">
<defs>
<linearGradient id="gA" x1="0" y1="0" x2="0" y2="1"><stop offset="0" stop-color="#7fd61a"/><stop offset="1" stop-color="#3d8c07"/></linearGradient>
<linearGradient id="gB" x1="0" y1="0" x2="1" y2="1"><stop offset="0" stop-color="#86e020"/><stop offset="1" stop-color="#4a9a0a"/></linearGradient>
</defs>
<!-- LEFT END -->
<g stroke="#6bf000" stroke-width="0.9" stroke-linejoin="round">
<polygon points="147,699 149,703.5 105.5,721.5 105,726.5 84.4,726.5 103,713 104.5,717" fill="url(#gA)"/>
<path d="M91,694 L106.5,685.3 L107,688 C112,682 125,679 133,686.8 C139,692 142,700 143.2,719 L131.5,723.5 C131,715 129,707 124,702 C118,697 111,698 106.5,700 L103.5,701.5 Z" fill="url(#gB)"/>
<path fill-rule="evenodd" d="M148,697 A22 21 0 1 0 192,697 A22 21 0 1 0 148,697 Z M161,688 A8 6.5 0 1 0 177,688 A8 6.5 0 1 0 161,688 Z" fill="#5cb812"/>
<path d="M150,684 C152,675 158,670 166,667 L170,676 C163,678 159,684 158,690 Z" fill="#7ee01c" stroke="none"/>
<polygon points="154,665 177,660.5 166,682" fill="#7ee01c"/>
<polygon points="173.3,646.3 183.75,652.5 186.7,690 177.9,690 174.2,660.8" fill="#5ab010"/>
<polygon points="165,675.8 195,683.3 195,677.5 209.2,699.2 198.3,706.7 196.7,693.3 170,683" fill="#62bc14"/>
<polygon points="168,713 195,709 186,722.5" fill="#5ab010"/>
</g>
<!-- RIGHT END M19 -->
<path d="M776,441.5 L845,412.4" stroke="#9cc0ee" stroke-width="1" stroke-dasharray="8 4 2 4"/>
<g stroke="#6bf000" stroke-width="0.9" stroke-linejoin="round">
<polygon points="909.5,383.6 912,388.8 868,409 868,411.6 845,412.4 861.7,397.8 865.8,403.8" fill="url(#gA)"/>
<path d="M809,393.5 C818,391 827,397 833,401.5 C839,406 842,410 843,413.7 C845,420 845.5,426 845,431.5 C844.5,435 843,438 842,440 C838,444 834,447 830,448.5 L818.4,456.5 L817.5,449.5 C820,446 822,444 824,442.5 C827,440 830,438 832,436.5 C833.5,433 834,431 834.2,429 C834,424 833,420 832,418 C829,413 825,411 822,409 C818,407 814,405 811,404 Z" fill="#6ccc16"/>
<polygon points="794.2,409 800,408.6 803,417.5 796,417" fill="#2f6a05"/>
<polygon points="781.5,407.3 829.9,431.5 831,426 833,445 817,447.5 821,441.7 782.7,421.3" fill="#74d418"/>
<polygon points="832.4,416.2 841.3,441.7 831.1,436.6" fill="#2f6a05"/>
<polygon points="805,390.8 812,399.7 811,401 818.4,467.2 808.2,462 803,406 797.4,402.9" fill="#69c814"/>
</g>
<!-- BOLT ARROW -->
<g stroke="#77ee11" stroke-width="1" stroke-linejoin="round">
<polygon points="476.5,686.7 491.5,686.7 496,737.5 506.7,737.5 488.3,753 473.3,737.5 481,737.5" fill="#3f8a08"/>
<polygon points="484,763 488,763 485,794 482,794" fill="#52a80c"/>
<path d="M478,760 A7,6 0 1 0 492,760 A7,6 0 1 0 478,760 Z M485,748 L480,759 L490,759 Z" fill="#3f8a08"/>
</g>
<!-- M5 END ARROWS -->
<g stroke="#77ee11" stroke-width="1" stroke-linejoin="round">
<polygon points="730.4,708.5 730.4,721 679,741.5 679,748 662,742.4 679,722.5 679,728.5" fill="#2f6205"/>
<polygon points="691.5,697.8 705.4,693.8 705.4,741 711.3,741 696.6,763 683.4,752 691.5,748" fill="#2f6205"/>
<path d="M712,782 L718,778 C723,789 735,793 748,788 C760,783 764,772 761,753 L770,761 C774,780 765,794 746,798 C730,801 718,794 712,782 Z" fill="url(#gB)"/>
<polygon points="722,749.5 724.5,752.5 758,778 762,776 768,790 754,786 756,781 721,754" fill="#6ccc16"/>
</g>
</svg>
<!--/ARROWS-->
<!--LABELS-->
<div class="a" style="left:803px;top:358px;width:25px;height:19px;background:rgba(143,143,143,.56);color:#111;font-size:14px;line-height:19px;padding-left:3px;white-space:nowrap;overflow:hidden">2.1</div>
<div class="a" style="left:922px;top:362px;width:25px;height:19px;background:rgba(143,143,143,.56);color:#111;font-size:14px;line-height:19px;padding-left:3px;white-space:nowrap;overflow:hidden">0.0</div>
<div class="a" style="left:176px;top:617px;width:30px;height:19px;background:rgba(143,143,143,.56);color:#111;font-size:14px;line-height:19px;padding-left:3px;white-space:nowrap;overflow:hidden">-0.1</div>
<div class="a" style="left:217px;top:686px;width:25px;height:19px;background:rgba(143,143,143,.56);color:#111;font-size:14px;line-height:19px;padding-left:3px;white-space:nowrap;overflow:hidden">0.0</div>
<div class="a" style="left:168px;top:696px;width:30px;height:19px;background:rgba(143,143,143,.56);color:#111;font-size:14px;line-height:19px;padding-left:3px;white-space:nowrap;overflow:hidden">-3.4</div>
<div class="a" style="left:106px;top:686px;width:25px;height:19px;background:rgba(143,143,143,.56);color:#111;font-size:14px;line-height:19px;padding-left:3px;white-space:nowrap;overflow:hidden">0.0</div>
<div class="a" style="left:68px;top:715px;width:25px;height:19px;background:rgba(143,143,143,.56);color:#111;font-size:14px;line-height:19px;padding-left:3px;white-space:nowrap;overflow:hidden">0.0</div>
<div class="a" style="left:487px;top:656px;width:26px;height:19px;background:rgba(143,143,143,.56);color:#111;font-size:14px;line-height:19px;padding-left:3px;white-space:nowrap;overflow:hidden">0.1</div>
<div class="a" style="left:483px;top:785px;width:25px;height:19px;background:rgba(143,143,143,.56);color:#111;font-size:14px;line-height:19px;padding-left:3px;white-space:nowrap;overflow:hidden">0.1</div>
<div class="a" style="left:698px;top:665px;width:30px;height:19px;background:rgba(143,143,143,.56);color:#111;font-size:14px;line-height:19px;padding-left:3px;white-space:nowrap;overflow:hidden">-1.9</div>
<div class="a" style="left:742px;top:690px;width:25px;height:19px;background:rgba(143,143,143,.56);color:#111;font-size:14px;line-height:19px;padding-left:3px;white-space:nowrap;overflow:hidden">0.0</div>
<div class="a" style="left:722px;top:757px;width:25px;height:19px;background:rgba(143,143,143,.56);color:#111;font-size:14px;line-height:19px;padding-left:3px;white-space:nowrap;overflow:hidden">0.0</div>
<div class="a" style="left:778px;top:781px;width:30px;height:19px;background:rgba(143,143,143,.56);color:#111;font-size:14px;line-height:19px;padding-left:3px;white-space:nowrap;overflow:hidden">-0.3</div>
<div class="a" style="left:454px;top:653px;width:38px;height:23px;background:#fff;color:#111;font-size:16px;line-height:23px;text-align:center;white-space:nowrap">M29</div>
<div class="a" style="left:525px;top:648px;width:38px;height:23px;background:#fff;color:#111;font-size:16px;line-height:23px;text-align:center;white-space:nowrap">M29</div>
<div class="a" style="left:593px;top:660px;width:29px;height:22px;background:#fff;color:#111;font-size:16px;line-height:22px;text-align:center;white-space:nowrap">M5</div>
<div class="a" style="left:651px;top:491px;width:38px;height:22px;background:#fff;color:#111;font-size:16px;line-height:22px;text-align:center;white-space:nowrap">M19</div>
<svg class="a" style="left:1115px;top:265px" width="125" height="105" viewBox="1115 265 125 105">
<ellipse cx="1176.5" cy="331.5" rx="45.5" ry="22" fill="none" stroke="#e0e0e0" stroke-width="11.5"/>
<path d="M1126,346 L1140,339 M1216,304 L1210,309" stroke="#999" stroke-width="1.2"/>
<path d="M1200,348 L1226,342 M1208,338 L1216,352" stroke="#888" stroke-width="2.5"/>
<polygon points="1138.3,284.8 1176.9,272.9 1207.5,282.7 1164.4,298.3" fill="#b4b4b4" stroke="#777" stroke-width="0.8"/>
<polygon points="1138.3,284.8 1164.4,298.3 1169.6,345.8 1146.25,324.4" fill="#a6a6a6" stroke="#777" stroke-width="0.8"/>
<polygon points="1164.4,298.3 1207.5,282.7 1208.75,325.4 1169.6,345.8" fill="#ababab" stroke="#777" stroke-width="0.8"/>
<path d="M1176.9,272.9 L1180,316 L1146.25,324.4 M1180,316 L1208.75,325.4" stroke="#8a8a8a" stroke-width="0.7" fill="none"/>
<text x="1183" y="317" font-size="8" fill="#eee" font-family="Liberation Sans">+X</text>
<text x="1166" y="285" font-size="6" fill="#eee" font-family="Liberation Sans">-Y</text>
</svg>
<svg class="a" style="left:15px;top:7px" width="200" height="30" viewBox="15 7 200 30">
<g transform="translate(0,33.5) skewX(-19.5)">
<rect x="19.5" y="-23.5" width="77" height="23.5" rx="3" fill="#f37021"/>
<rect x="22" y="-21" width="72" height="18.5" rx="1.5" fill="#000"/>
<rect x="29.5" y="-21" width="2.2" height="18.5" fill="#f37021"/>
<rect x="35.5" y="-16.5" width="10" height="9.5" fill="#f37021"/>
<rect x="48.5" y="-21" width="2.2" height="18.5" fill="#f37021"/>
<rect x="55" y="-13" width="14" height="3" fill="#f37021"/>
<rect x="54.5" y="-16.5" width="10" height="2" fill="#f37021"/>
<rect x="54.5" y="-7.5" width="15" height="5" fill="#f37021"/>
<rect x="70" y="-21" width="2.2" height="18.5" fill="#f37021"/>
<rect x="72" y="-16.5" width="15" height="3" fill="#f37021"/>
<rect x="76" y="-10" width="12" height="4" fill="#f37021"/>
</g>
</svg>
<div class="a" style="left:106px;top:5px;color:#fff;font-size:27px;font-weight:bold;font-style:italic;line-height:32px;letter-spacing:-0.5px">StatiCa</div>
<div class="a" style="left:199px;top:9px;color:#ccc;font-size:8px;line-height:10px">&#174;</div>
<div class="a" style="left:228px;top:9px;color:#fff;font-size:20.8px;font-weight:bold;font-style:italic;line-height:24px;letter-spacing:-0.3px">CONNECTION</div>
<div class="a" style="left:19px;top:42px;color:#fff;font-size:11.5px;font-weight:bold;font-style:italic;line-height:14px">Calculate yesterday's estimates</div>
<!--/LABELS-->
<!--TREE-->
<svg class="a" style="left:1070px;top:542px" width="175" height="102"><path d="M10 64H140L159 76.5L140 89.5H10Z" fill="#f37021"/><rect x="3" y="3" width="168" height="96" rx="9" fill="none" stroke="#fe0000" stroke-width="5"/></svg>
<svg class="a" style="left:1063px;top:391px" width="12" height="10"><path d="M10 1V9H2Z" fill="#444"/></svg>
<div class="a" style="left:1092px;top:387.8px;font-size:15px;line-height:16px;white-space:nowrap;color:#333;font-weight:bold">Members</div>
<svg class="a" style="left:1091px;top:413px" width="18" height="18"><rect x="1" y="3" width="14" height="14" rx="1" fill="#e4e4e4"/><path d="M3.5 10L7 13.5L13.5 2.5" fill="none" stroke="#9a9a9a" stroke-width="2.2"/></svg>
<div class="a" style="left:1126px;top:415.8px;font-size:15px;line-height:16px;white-space:nowrap;color:#333;color:#333"><u>M5</u></div>
<svg class="a" style="left:1091px;top:441px" width="18" height="18"><rect x="1" y="3" width="14" height="14" rx="1" fill="#e4e4e4"/><path d="M3.5 10L7 13.5L13.5 2.5" fill="none" stroke="#9a9a9a" stroke-width="2.2"/></svg>
<div class="a" style="left:1126px;top:443.8px;font-size:15px;line-height:16px;white-space:nowrap;color:#333;color:#333">M19</div>
<svg class="a" style="left:1091px;top:469px" width="18" height="18"><rect x="1" y="3" width="14" height="14" rx="1" fill="#e4e4e4"/><path d="M3.5 10L7 13.5L13.5 2.5" fill="none" stroke="#9a9a9a" stroke-width="2.2"/></svg>
<div class="a" style="left:1126px;top:471.8px;font-size:15px;line-height:16px;white-space:nowrap;color:#333;color:#333">M29</div>
<svg class="a" style="left:1063px;top:503px" width="12" height="10"><path d="M10 1V9H2Z" fill="#444"/></svg>
<div class="a" style="left:1092px;top:499.8px;font-size:15px;line-height:16px;white-space:nowrap;color:#333;font-weight:bold">Load effects</div>
<svg class="a" style="left:1091px;top:525px" width="18" height="18"><rect x="1" y="3" width="14" height="14" rx="1" fill="#e4e4e4"/><path d="M3.5 10L7 13.5L13.5 2.5" fill="none" stroke="#f37021" stroke-width="2.2"/></svg>
<div class="a" style="left:1126px;top:527.8px;font-size:15px;line-height:16px;white-space:nowrap;color:#333;color:#333">LE1</div>
<svg class="a" style="left:1091px;top:553px" width="18" height="18"><rect x="1" y="3" width="14" height="14" rx="1" fill="#e4e4e4"/><path d="M3.5 10L7 13.5L13.5 2.5" fill="none" stroke="#f37021" stroke-width="2.2"/></svg>
<div class="a" style="left:1126px;top:555.8px;font-size:15px;line-height:16px;white-space:nowrap;color:#333;color:#333">13 : CO3(1)</div>
<svg class="a" style="left:1091px;top:581px" width="18" height="18"><rect x="1" y="3" width="14" height="14" rx="1" fill="#e4e4e4"/><path d="M3.5 10L7 13.5L13.5 2.5" fill="none" stroke="#f37021" stroke-width="2.2"/></svg>
<div class="a" style="left:1126px;top:583.8px;font-size:15px;line-height:16px;white-space:nowrap;color:#333;color:#333">11 : CO1(2)</div>
<svg class="a" style="left:1091px;top:609px" width="18" height="18"><rect x="1" y="3" width="14" height="14" rx="1" fill="#f6b38a"/><path d="M3.5 10L7 13.5L13.5 2.5" fill="none" stroke="#f37021" stroke-width="2.2"/></svg>
<div class="a" style="left:1126px;top:611.8px;font-size:15px;line-height:16px;white-space:nowrap;color:#333;color:#fff;font-weight:bold">12 : CO2(3)</div>
<svg class="a" style="left:1063px;top:643px" width="12" height="10"><path d="M10 1V9H2Z" fill="#444"/></svg>
<div class="a" style="left:1092px;top:639.8px;font-size:15px;line-height:16px;white-space:nowrap;color:#333;font-weight:bold">Operations</div>
<svg class="a" style="left:1091px;top:665px" width="18" height="18"><rect x="1" y="3" width="14" height="14" rx="1" fill="#e4e4e4"/><path d="M3.5 10L7 13.5L13.5 2.5" fill="none" stroke="#f37021" stroke-width="2.2"/></svg>
<div class="a" style="left:1126px;top:667.8px;font-size:15px;line-height:16px;white-space:nowrap;color:#333;color:#333">FP1</div>
<svg class="a" style="left:1091px;top:693px" width="18" height="18"><rect x="1" y="3" width="14" height="14" rx="1" fill="#e4e4e4"/><path d="M3.5 10L7 13.5L13.5 2.5" fill="none" stroke="#f37021" stroke-width="2.2"/></svg>
<div class="a" style="left:1126px;top:695.8px;font-size:15px;line-height:16px;white-space:nowrap;color:#333;color:#333">CPL1</div>
<!--/TREE-->
<!--/MAIN-->
</body></html>
